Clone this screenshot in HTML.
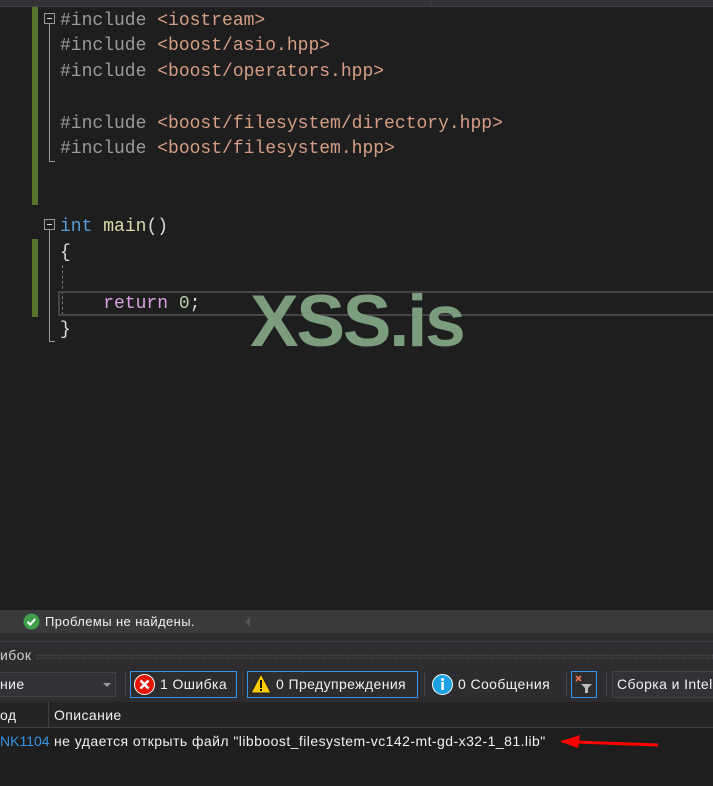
<!DOCTYPE html>
<html><head><meta charset="utf-8"><style>
*{margin:0;padding:0;box-sizing:border-box}
body{width:713px;height:786px;background:#1e1e1e;position:relative;overflow:hidden;font-family:"Liberation Sans",sans-serif}
.a{position:absolute}
.code{font-family:"Liberation Mono",monospace;font-size:18px;color:#9b9b9b;white-space:pre;line-height:25.8px}
.s{color:#d69d85}.k{color:#569cd6}.f{color:#dcdcaa}.r{color:#d8a0df}.n{color:#b5cea8}.w{color:#dcdcdc}
.ui{font-size:14px;color:#f1f1f1;white-space:nowrap;letter-spacing:0.4px}
.btn{position:absolute;top:671px;height:27px;border:1px solid #3794e6;background:#2d2d30}
</style></head><body>
<div class="a" style="left:0;top:0;width:430px;height:7px;background:#333337;border-bottom:1px solid #3f3f46"></div>
<div class="a" style="left:430px;top:0;width:283px;height:7px;background:#333337;border-bottom:1px solid #3f3f46;border-left:1px solid #3f3f46"></div>
<div class="a" style="left:32px;top:7px;width:6px;height:198px;background:#57762b"></div>
<div class="a" style="left:32px;top:239px;width:6px;height:78px;background:#57762b"></div>
<div class="a" style="left:44px;top:13px;width:11px;height:11px;border:1px solid #999"><div class="a" style="left:2px;top:4px;width:5px;height:1px;background:#ddd"></div></div>
<div class="a" style="left:49px;top:24px;width:1px;height:137px;background:#999"></div>
<div class="a" style="left:49px;top:161px;width:6px;height:1px;background:#999"></div>
<div class="a" style="left:44px;top:219px;width:11px;height:11px;border:1px solid #999"><div class="a" style="left:2px;top:4px;width:5px;height:1px;background:#ddd"></div></div>
<div class="a" style="left:49px;top:230px;width:1px;height:111px;background:#999"></div>
<div class="a" style="left:49px;top:341px;width:6px;height:1px;background:#999"></div>
<div class="a" style="left:62px;top:265px;width:0;height:50px;border-left:1px dashed #777"></div>
<div class="a" style="left:58px;top:291px;width:660px;height:25px;border:2px solid #464646"></div>
<div class="a code" style="left:60px;top:8.5px">#include <span class="s">&lt;iostream&gt;</span>
#include <span class="s">&lt;boost/asio.hpp&gt;</span>
#include <span class="s">&lt;boost/operators.hpp&gt;</span>

#include <span class="s">&lt;boost/filesystem/directory.hpp&gt;</span>
#include <span class="s">&lt;boost/filesystem.hpp&gt;</span>


<span class="k">int</span> <span class="f">main</span><span class="w">()</span>
<span class="w">{</span>

<span class="r">    return</span> <span class="n">0</span><span class="w">;</span>
<span class="w">}</span></div>
<div class="a" style="left:250px;top:282px;font-size:73px;font-weight:bold;color:#7b9c7d;letter-spacing:-2.3px;line-height:80px">XSS.is</div>
<div class="a" style="left:0;top:610px;width:713px;height:23px;background:#3a3a3d"></div>
<svg class="a" style="left:23px;top:613px" width="17" height="17"><circle cx="8.5" cy="8.5" r="8" fill="#3f9f4a"/><path d="M4.5 8.8l2.7 2.7 5-5.5" stroke="#fff" stroke-width="2" fill="none"/></svg>
<div class="a ui" style="left:45px;top:614px;font-size:13px">Проблемы не найдены.</div>
<div class="a" style="left:245px;top:617px;width:0;height:0;border-right:5px solid #555;border-top:5px solid transparent;border-bottom:5px solid transparent"></div>
<div class="a" style="left:0;top:633px;width:713px;height:8px;background:#2d2d30"></div>
<div class="a" style="left:0;top:641px;width:713px;height:1px;background:#3f3f46"></div>
<div class="a" style="left:0;top:642px;width:713px;height:60px;background:#2d2d30"></div>
<div class="a ui" style="left:0;top:647px;color:#d0d0d0">ибок</div>
<div class="a" style="left:36px;top:654px;width:677px;height:5px;background-image:radial-gradient(#46464a 1px,transparent 1px);background-size:3px 3px"></div>
<div class="a" style="left:-2px;top:672px;width:118px;height:25px;background:#333337;border:1px solid #434346"></div>
<div class="a ui" style="left:0;top:676px">ние</div>
<div class="a" style="left:103px;top:683px;border-top:4px solid #999;border-left:4px solid transparent;border-right:4px solid transparent"></div>
<div class="a" style="left:125px;top:673px;width:1px;height:23px;background:#46464a"></div>
<div class="btn" style="left:130px;width:107px"></div>
<svg class="a" style="left:134px;top:674px" width="21" height="21"><circle cx="10.5" cy="10.5" r="10" fill="#e51400" stroke="#fff" stroke-width="1"/><path d="M6.5 6.5l8 8M14.5 6.5l-8 8" stroke="#fff" stroke-width="2.5"/></svg>
<div class="a ui" style="left:160px;top:676px">1 Ошибка</div>
<div class="a" style="left:242px;top:673px;width:1px;height:23px;background:#46464a"></div>
<div class="btn" style="left:247px;width:171px"></div>
<svg class="a" style="left:250px;top:673px" width="22" height="22"><path d="M11 1L21 20H1Z" fill="#fc0" stroke="#222" stroke-width="1"/><rect x="10" y="7" width="2" height="8" fill="#111"/><rect x="10" y="16" width="2" height="2" fill="#111"/></svg>
<div class="a ui" style="left:276px;top:676px">0 Предупреждения</div>
<div class="a" style="left:424px;top:673px;width:1px;height:23px;background:#46464a"></div>
<svg class="a" style="left:432px;top:674px" width="21" height="21"><circle cx="10.5" cy="10.5" r="10" fill="#1ba1e2" stroke="#fff" stroke-width="1"/><rect x="9.3" y="8" width="2.6" height="8" fill="#fff"/><circle cx="10.6" cy="5.5" r="1.5" fill="#fff"/></svg>
<div class="a ui" style="left:458px;top:676px">0 Сообщения</div>
<div class="a" style="left:566px;top:673px;width:1px;height:23px;background:#46464a"></div>
<div class="btn" style="left:571px;width:26px"></div>
<svg class="a" style="left:573px;top:673px" width="22" height="22"><path d="M3 3l5 5M8 3l-5 5" stroke="#e07050" stroke-width="1.8"/><path d="M8 11h11l-4 4v5h-3v-5z" fill="#bbb"/></svg>
<div class="a" style="left:606px;top:673px;width:1px;height:23px;background:#46464a"></div>
<div class="a" style="left:612px;top:671px;width:110px;height:27px;background:#333337;border:1px solid #434346"></div>
<div class="a ui" style="left:617px;top:676px">Сборка и Intel</div>
<div class="a" style="left:0;top:702px;width:713px;height:26px;background:#252526;border-bottom:1px solid #3f3f46"></div>
<div class="a" style="left:48px;top:702px;width:1px;height:26px;background:#3f3f46"></div>
<div class="a ui" style="left:0;top:707px">од</div>
<div class="a ui" style="left:54px;top:707px">Описание</div>
<div class="a" style="left:0;top:729px;width:713px;height:57px;background:#1e1e1e"></div>
<div class="a ui" style="left:0;top:733px;color:#3794e6;letter-spacing:0">NK1104</div>
<div class="a ui" style="left:54px;top:733px;letter-spacing:0.45px">не удается открыть файл "libboost_filesystem-vc142-mt-gd-x32-1_81.lib"</div>
<svg class="a" style="left:558px;top:732px" width="104" height="20"><path d="M4 9.5L100 13" stroke="#f00" stroke-width="3"/><path d="M2 9.5L22 3L20 16Z" fill="#f00"/></svg>
</body></html>
